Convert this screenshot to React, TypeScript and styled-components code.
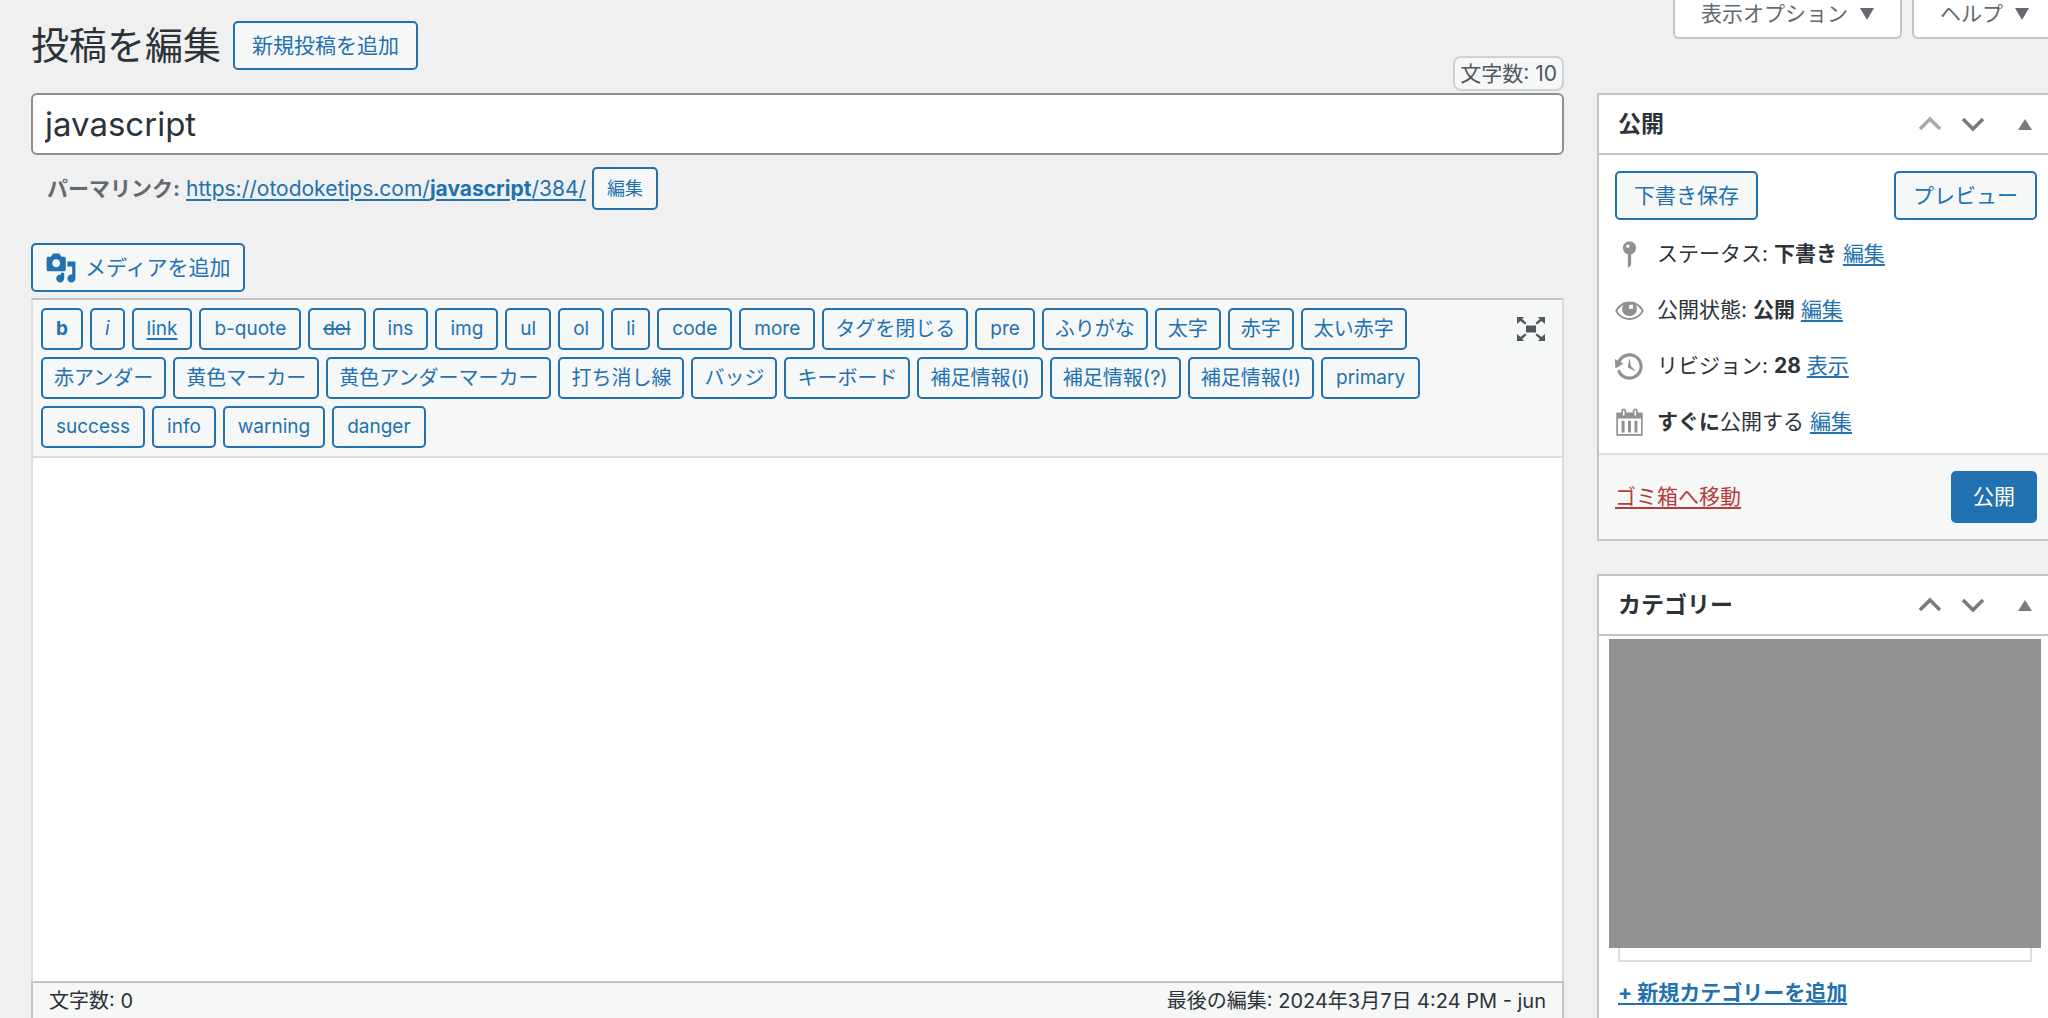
import React, { ReactNode } from "react";
import styled, { createGlobalStyle, css } from "styled-components";

const color = {
  page: "#f0f0f0",
  surface: "#f6f7f7",
  blue: "#2271b1",
  text: "#2c3338",
  heading: "#2c3338",
  muted: "#50575e",
  border: "#c3c4c7",
  hairline: "#dcdcde",
  icon: "#8f9192",
  danger: "#b93a3b",
};

const GlobalStyle = createGlobalStyle`
  *, *::before, *::after { box-sizing: border-box; }
  body {
    margin: 0;
    overflow-x: hidden;
    background: ${color.page};
    color: ${color.text};
    font: 400 21px/32px Inter, "Noto Sans CJK JP", sans-serif;
  }
  button, input, textarea { font-family: inherit; }
  h1, h2, p, ul { margin: 0; padding: 0; }
  ul { list-style: none; }
`;

const Page = styled.div`
  display: grid;
  grid-template-columns: minmax(0, 1fr) 457px;
  grid-template-rows: 93px minmax(0, 1fr);
  column-gap: 33px;
  min-height: 100vh;
  margin-right: -6px;
  padding-left: 31px;
`;

const Header = styled.header`
  display: flex;
  align-items: flex-start;
  gap: 12px;
`;

const Title = styled.h1`
  padding-top: 21px;
  color: ${color.heading};
  font-size: 38px;
  line-height: 48px;
  font-weight: 400;
`;

const outlined = css`
  border: 2px solid ${color.blue};
  border-radius: 5px;
  background: ${color.surface};
  color: ${color.blue};
  cursor: pointer;
  white-space: nowrap;
`;

const Button = styled.button`
  ${outlined}
  display: inline-flex;
  align-items: center;
  justify-content: center;
  height: 49px;
  padding: 0 17px;
  font-size: 21px;
  line-height: 32px;
`;

const AddNew = styled(Button)`
  margin-top: 21px;
`;

const MediaButton = styled(Button)`
  align-self: flex-start;
  gap: 8px;
  padding: 0 12px;
`;

const SmallButton = styled(Button)`
  height: 43px;
  padding: 0 13px;
  font-size: 18px;
`;

const PublishButton = styled(Button)`
  height: 52px;
  padding: 0 20px;
  background: ${color.blue};
  color: #fff;
`;

const CountBadge = styled.span`
  align-self: flex-end;
  margin: 0 0 2px auto;
  padding: 0 5px;
  border: 2px solid #d0d1d3;
  border-radius: 8px;
  background: ${color.surface};
  color: ${color.muted};
  line-height: 31px;
`;

const ScreenTabs = styled.div`
  display: flex;
  justify-content: flex-end;
  align-items: flex-start;
  gap: 10px;
`;

const ScreenTab = styled.button`
  display: flex;
  align-items: center;
  gap: 12px;
  height: 39px;
  padding: 0 26px 10px;
  border: 2px solid ${color.border};
  border-top: 0;
  border-radius: 0 0 6px 6px;
  background: #fff;
  color: #646970;
  font-size: 21px;
  line-height: 28px;
  cursor: pointer;

  &:last-child { padding-right: 23px; }
`;

const Main = styled.main`
  display: flex;
  flex-direction: column;
`;

const TitleInput = styled.input`
  width: 100%;
  height: 62px;
  padding: 0 12px;
  border: 2px solid #8c8f94;
  border-radius: 6px;
  background: #fff;
  color: ${color.text};
  font-size: 33px;
  line-height: 48px;
`;

const Permalink = styled.div`
  display: flex;
  align-items: center;
  gap: 6px;
  margin: 12px 0 33px;
  padding-left: 16px;
  color: #646970;
`;

const Link = styled.a<{ $danger?: boolean; $bold?: boolean }>`
  color: ${(p) => (p.$danger ? color.danger : color.blue)};
  font-weight: ${(p) => (p.$bold ? 700 : 400)};
  text-decoration: underline;
  text-decoration-thickness: 2px;
  text-underline-offset: 3px;
`;

const Editor = styled.section`
  flex: 1;
  display: flex;
  flex-direction: column;
  margin-top: 6px;
  border: 2px solid ${color.hairline};
  border-top-color: ${color.border};
  border-bottom: 0;
  background: #fff;
`;

const Toolbar = styled.div`
  display: flex;
  align-items: flex-start;
  justify-content: space-between;
  padding: 8px 10px 8px 8px;
  border-bottom: 2px solid ${color.hairline};
  background: ${color.surface};
`;

const TagList = styled.div`
  flex: 1;
  display: flex;
  flex-wrap: wrap;
  gap: 7px;
`;

const TagButton = styled.button<{ $look?: string; $japanese?: boolean }>`
  ${outlined}
  height: 42px;
  padding: 0 ${(p) => (p.$japanese ? 11 : 13)}px;
  font-size: ${(p) => (p.$japanese ? 20 : 19)}px;
  line-height: 28px;
  font-weight: ${(p) => (p.$look === "bold" ? 700 : 400)};
  font-style: ${(p) => (p.$look === "italic" ? "italic" : "normal")};
  text-decoration: ${(p) =>
    p.$look === "underline" ? "underline" : p.$look === "strike" ? "line-through" : "none"};
  text-decoration-thickness: 2px;
  text-underline-offset: 3px;
`;

const IconButton = styled.button`
  display: flex;
  align-items: center;
  justify-content: center;
  width: 43px;
  height: 42px;
  padding: 0;
  border: 0;
  background: none;
  color: #787c82;
  cursor: pointer;

  &:disabled { color: #a7aaad; }
`;

const Content = styled.textarea`
  flex: 1;
  display: block;
  width: 100%;
  padding: 16px;
  border: 0;
  outline: 0;
  resize: none;
  background: #fff;
  font-size: 21px;
`;

const StatusBar = styled.footer`
  display: flex;
  align-items: center;
  justify-content: space-between;
  height: 37px;
  margin: 0 -2px;
  padding: 0 16px;
  border: 2px solid ${color.border};
  border-bottom: 0;
  background: ${color.surface};
  font-size: 20px;
  line-height: 28px;
`;

const Sidebar = styled.aside`
  display: flex;
  flex-direction: column;
  gap: 33px;
`;

const Box = styled.section<{ $grow?: boolean }>`
  flex: ${(p) => (p.$grow ? "1 0 auto" : "none")};
  border: 2px solid ${color.border};
  border-bottom-width: ${(p) => (p.$grow ? 0 : 2)}px;
  background: #fff;
`;

const BoxHeader = styled.div`
  display: flex;
  align-items: center;
  height: 60px;
  padding: 0 6px 0 19px;
  border-bottom: 2px solid ${color.border};
`;

const BoxTitle = styled.h2`
  flex: 1;
  color: ${color.heading};
  font-size: 23px;
  line-height: 32px;
  font-weight: 700;
`;

const Toggle = styled(IconButton)`
  margin-left: 9px;
`;

const Actions = styled.div`
  display: flex;
  justify-content: space-between;
  padding: 16px 15px 6px 16px;
`;

const Facts = styled.ul`
  padding: 0 14px 3px;
`;

const Fact = styled.li`
  display: flex;
  align-items: center;
  gap: 11px;
  height: 56px;

  svg { color: ${color.icon}; }
`;

const BoxFooter = styled.div`
  display: flex;
  align-items: center;
  justify-content: space-between;
  padding: 16px 15px 16px 16px;
  border-top: 2px solid ${color.hairline};
  background: ${color.surface};
`;

const CategoryArea = styled.div`
  padding: 3px 11px 0 10px;
`;

const Cover = styled.div`
  height: 309px;
  background: #919392;
`;

const PanelEdge = styled.div`
  height: 14px;
  margin: 0 9px;
  border: 2px solid ${color.hairline};
  border-top: 0;
`;

const AddCategory = styled.p`
  margin: 15px 9px 0;
`;

const Dash = ({ d, size = 33 }: { d: string; size?: number }) => (
  <svg width={size} height={size} viewBox="0 0 20 20" fill="currentColor" aria-hidden="true">
    <path fillRule="evenodd" d={d} />
  </svg>
);

const mediaPath =
  "M13 11V4c0-.55-.45-1-1-1h-1.67L9 1H5L3.67 3H2c-.55 0-1 .45-1 1v7c0 .55.45 1 1 1h10c.55 0 1-.45 1-1zM7 4.5c1.38 0 2.5 1.12 2.5 2.5S8.38 9.5 7 9.5 4.5 8.38 4.5 7 5.62 4.5 7 4.5zM14 6h5v10.5c0 1.38-1.12 2.5-2.5 2.5S14 17.88 14 16.5s1.12-2.5 2.5-2.5c.17 0 .34.02.5.05V9h-3V6zm-4 8.05V13h2v3.5c0 1.38-1.12 2.5-2.5 2.5S7 17.88 7 16.5 8.12 14 9.5 14c.17 0 .34.02.5.05z";
const pinPath =
  "M14 6c0 1.86-1.28 3.41-3 3.86V16c0 1-2 2-2 2V9.86c-1.72-.45-3-2-3-3.86 0-2.21 1.79-4 4-4s4 1.79 4 4zM8 5c0 .55.45 1 1 1s1-.45 1-1-.45-1-1-1-1 .45-1 1z";
const eyePath =
  "M10 4.6c-3.700 0-6.900 2-8.700 5.600 1.800 3.600 5 5.500 8.700 5.500s6.900-1.900 8.700-5.500C16.900 6.600 13.700 4.600 10 4.600zM10 14.600c-3 0-5.700-1.500-7.400-4.400C3.500 8.600 4.800 7.300 6.300 6.600 5.800 7.300 5.500 8.100 5.500 9c0 2.500 2 4.500 4.500 4.500s4.500-2 4.500-4.500c0-.9-.3-1.700-.8-2.400 1.500.7 2.800 2 3.700 3.600-1.700 2.900-4.400 4.400-7.400 4.400zM10.200 6.500h1.900v2.400h-2.400V7z";
const revisionsPath =
  "M13.65 2.88c3.93 2.01 5.48 6.84 3.47 10.77s-6.83 5.48-10.77 3.47c-1.87-.96-3.2-2.56-3.86-4.4l1.64-1.03c.45 1.57 1.52 2.95 3.08 3.76 3.01 1.54 6.69.35 8.23-2.66 1.55-3.01.36-6.69-2.65-8.24C9.78 3.01 6.1 4.2 4.56 7.21l1.88.97-4.95 3.08-.39-5.82 1.78.91C4.9 2.4 9.75.89 13.65 2.88zm-4.36 7.83C9.11 10.53 9 10.28 9 10c0-.07.03-.12.04-.19h-.01L10 5l.97 4.81L14 13l-4.5-2.12.02-.02c-.08-.04-.16-.09-.23-.15z";
const calendarPath =
  "M15 4h3v14H2V4h3V3c0-.41.15-.76.44-1.06.29-.29.65-.44 1.06-.44s.77.15 1.06.44c.29.3.44.65.44 1.06v1h4V3c0-.41.15-.76.44-1.06.29-.29.65-.44 1.06-.44s.77.15 1.06.44c.29.3.44.65.44 1.06v1zM6 3v2.500c0 .28.22.5.5.5s.5-.22.5-.5V3c0-.28-.22-.5-.5-.5S6 2.720 6 3zm7 0v2.500c0 .28.22.5.5.5s.5-.22.5-.5V3c0-.28-.22-.5-.5-.5s-.5.22-.5.5zM17 17V7.500H3V17h14zM5.200 9h1.800v7H5.200zM9.100 9h1.800v7H9.100zM13 9h1.800v7H13z";

const Fullscreen = () => (
  <svg width="28" height="24" viewBox="0 0 28 24" fill="#50575e" aria-hidden="true">
    <path d="M9 8.500h10v7H9z" />
    <path d="M0 0h7L5.200 2 9.500 6 8 7.500 3.500 4 0 7zM28 0h-7l1.800 2L18.500 6 20 7.500 24.500 4 28 7zM0 24h7l-1.800-2 4.300-4L8 16.500 3.500 20 0 17zM28 24h-7l1.800-2-4.300-4 1.500-1.500 4.500 3.500 3.500-3z" />
  </svg>
);

const Chevron = ({ down }: { down?: boolean }) => (
  <svg width="24" height="16" viewBox="0 0 24 16" fill="none" stroke="currentColor" strokeWidth="3.500" aria-hidden="true">
    <path d={down ? "M2 3l10 10L22 3" : "M2 13L12 3l10 10"} />
  </svg>
);

const Triangle = ({ down }: { down?: boolean }) => (
  <svg width="14" height="12" viewBox="0 0 14 12" fill={down ? "#646970" : "#787c82"} aria-hidden="true">
    <path d={down ? "M0 0h14L7 12z" : "M0 12h14L7 1z"} />
  </svg>
);

const PostBox = (p: { title: string; first?: boolean; grow?: boolean; children: ReactNode }) => (
  <Box $grow={p.grow}>
    <BoxHeader>
      <BoxTitle>{p.title}</BoxTitle>
      <IconButton type="button" aria-label="上に移動" disabled={p.first}>
        <Chevron />
      </IconButton>
      <IconButton type="button" aria-label="下に移動">
        <Chevron down />
      </IconButton>
      <Toggle type="button" aria-label="パネルを切り替え">
        <Triangle />
      </Toggle>
    </BoxHeader>
    {p.children}
  </Box>
);

const tags: { label: string; look?: string }[] = [
  { label: "b", look: "bold" },
  { label: "i", look: "italic" },
  { label: "link", look: "underline" },
  { label: "b-quote" },
  { label: "del", look: "strike" },
  ...[
    "ins", "img", "ul", "ol", "li", "code", "more", "タグを閉じる", "pre", "ふりがな",
    "太字", "赤字", "太い赤字", "赤アンダー", "黄色マーカー", "黄色アンダーマーカー",
    "打ち消し線", "バッジ", "キーボード", "補足情報(i)", "補足情報(?)", "補足情報(!)",
    "primary", "success", "info", "warning", "danger",
  ].map((label) => ({ label })),
];

const isJapanese = (label: string) => /[^\x00-\x7f]/.test(label);

export default function App() {
  return (
    <>
      <GlobalStyle />
      <Page>
        <Header>
          <Title>投稿を編集</Title>
          <AddNew type="button">新規投稿を追加</AddNew>
          <CountBadge>文字数: 10</CountBadge>
        </Header>
        <ScreenTabs>
          <ScreenTab type="button">
            表示オプション <Triangle down />
          </ScreenTab>
          <ScreenTab type="button">
            ヘルプ <Triangle down />
          </ScreenTab>
        </ScreenTabs>

        <Main>
          <TitleInput aria-label="タイトル" defaultValue="javascript" />
          <Permalink>
            <strong>パーマリンク:</strong>
            <Link href="#permalink">
              https://otodoketips.com/<strong>javascript</strong>/384/
            </Link>
            <SmallButton type="button">編集</SmallButton>
          </Permalink>
          <MediaButton type="button">
            <Dash d={mediaPath} size={32} />
            メディアを追加
          </MediaButton>
          <Editor>
            <Toolbar>
              <TagList>
                {tags.map((t) => (
                  <TagButton
                    key={t.label}
                    type="button"
                    $look={t.look}
                    $japanese={isJapanese(t.label)}
                  >
                    {t.label}
                  </TagButton>
                ))}
              </TagList>
              <IconButton type="button" aria-label="全画面">
                <Fullscreen />
              </IconButton>
            </Toolbar>
            <Content aria-label="本文" />
            <StatusBar>
              <span>文字数: 0</span>
              <span>最後の編集: 2024年3月7日 4:24 PM - jun</span>
            </StatusBar>
          </Editor>
        </Main>

        <Sidebar>
          <PostBox title="公開" first>
            <Actions>
              <Button type="button">下書き保存</Button>
              <Button type="button">プレビュー</Button>
            </Actions>
            <Facts>
              <Fact>
                <Dash d={pinPath} />
                <span>
                  ステータス: <strong>下書き</strong> <Link href="#status">編集</Link>
                </span>
              </Fact>
              <Fact>
                <Dash d={eyePath} />
                <span>
                  公開状態: <strong>公開</strong> <Link href="#visibility">編集</Link>
                </span>
              </Fact>
              <Fact>
                <Dash d={revisionsPath} />
                <span>
                  リビジョン: <strong>28</strong> <Link href="#revisions">表示</Link>
                </span>
              </Fact>
              <Fact>
                <Dash d={calendarPath} />
                <span>
                  <strong>すぐに</strong>公開する <Link href="#schedule">編集</Link>
                </span>
              </Fact>
            </Facts>
            <BoxFooter>
              <Link href="#trash" $danger>
                ゴミ箱へ移動
              </Link>
              <PublishButton type="button">公開</PublishButton>
            </BoxFooter>
          </PostBox>
          <PostBox title="カテゴリー" grow>
            <CategoryArea>
              <Cover />
              <PanelEdge />
              <AddCategory>
                <Link href="#add-category" $bold>
                  + 新規カテゴリーを追加
                </Link>
              </AddCategory>
            </CategoryArea>
          </PostBox>
        </Sidebar>
      </Page>
    </>
  );
}
